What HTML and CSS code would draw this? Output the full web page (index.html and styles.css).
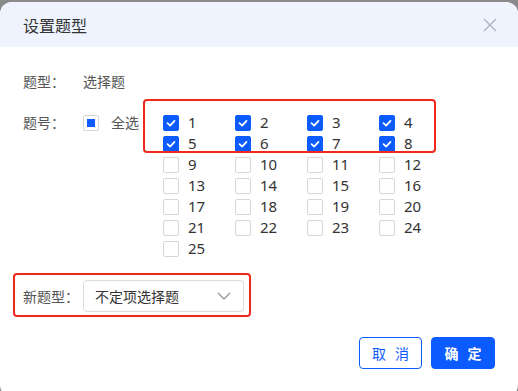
FILE: index.html
```html
<!DOCTYPE html>
<html>
<head>
    <link rel="stylesheet" href="styles.css">
</head>
<body>
    <div class="dialog">
        <div class="dialog-header">
            <span class="dialog-title">设置题型</span>
            <svg class="close" width="14" height="14" viewBox="0 0 14 14">
                <path d="M1 1 L13 13 M13 1 L1 13" stroke="#a9b1c2" stroke-width="1.3" fill="none"/>
            </svg>
        </div>
        <div class="dialog-body">
            <div class="form-row type-row">
                <span class="label">题型：</span>
                <span class="value">选择题</span>
            </div>
            <div class="form-row number-row">
                <span class="label">题号：</span>
                <label class="select-all">
                    <span class="box half"><span class="dot"></span></span>
                    <span>全选</span>
                </label>
                <div class="num-grid">
                    <div class="mark mark-grid"></div>
                    <label class="item"><span class="box on"><svg viewBox="0 0 16 16"><path d="M4 8.2 L7 11 L12 5.5"/></svg></span>1</label>
                    <label class="item"><span class="box on"><svg viewBox="0 0 16 16"><path d="M4 8.2 L7 11 L12 5.5"/></svg></span>2</label>
                    <label class="item"><span class="box on"><svg viewBox="0 0 16 16"><path d="M4 8.2 L7 11 L12 5.5"/></svg></span>3</label>
                    <label class="item"><span class="box on"><svg viewBox="0 0 16 16"><path d="M4 8.2 L7 11 L12 5.5"/></svg></span>4</label>
                    <label class="item"><span class="box on"><svg viewBox="0 0 16 16"><path d="M4 8.2 L7 11 L12 5.5"/></svg></span>5</label>
                    <label class="item"><span class="box on"><svg viewBox="0 0 16 16"><path d="M4 8.2 L7 11 L12 5.5"/></svg></span>6</label>
                    <label class="item"><span class="box on"><svg viewBox="0 0 16 16"><path d="M4 8.2 L7 11 L12 5.5"/></svg></span>7</label>
                    <label class="item"><span class="box on"><svg viewBox="0 0 16 16"><path d="M4 8.2 L7 11 L12 5.5"/></svg></span>8</label>
                    <label class="item"><span class="box"></span>9</label>
                    <label class="item"><span class="box"></span>10</label>
                    <label class="item"><span class="box"></span>11</label>
                    <label class="item"><span class="box"></span>12</label>
                    <label class="item"><span class="box"></span>13</label>
                    <label class="item"><span class="box"></span>14</label>
                    <label class="item"><span class="box"></span>15</label>
                    <label class="item"><span class="box"></span>16</label>
                    <label class="item"><span class="box"></span>17</label>
                    <label class="item"><span class="box"></span>18</label>
                    <label class="item"><span class="box"></span>19</label>
                    <label class="item"><span class="box"></span>20</label>
                    <label class="item"><span class="box"></span>21</label>
                    <label class="item"><span class="box"></span>22</label>
                    <label class="item"><span class="box"></span>23</label>
                    <label class="item"><span class="box"></span>24</label>
                    <label class="item"><span class="box"></span>25</label>
                </div>
            </div>
            <div class="form-row new-row">
                <div class="mark mark-new"></div>
                <span class="label">新题型：</span>
                <div class="select">
                    <span>不定项选择题</span>
                    <svg width="14" height="8" viewBox="0 0 14 8">
                        <path d="M1 1 L7 7 L13 1" stroke="#8a8f99" stroke-width="1.2" fill="none"/>
                    </svg>
                </div>
            </div>
        </div>
        <div class="dialog-footer">
            <button class="btn btn-cancel">取 消</button>
            <button class="btn btn-ok">确 定</button>
        </div>
    </div>
</body>
</html>
```
FILE: styles.css
```css
:root {
    --blue: #0b5bff;
    --red: #f2281f;
    --label: #555;
    --text: #333;
}

body {
    margin: 0;
    background: #8a8a8a;
    font-family: "Noto Sans", "Noto Sans CJK SC", sans-serif;
    font-size: 14px;
    color: var(--text);
}

.dialog {
    margin-top: 2px;
    height: 395px;
    background: #fff;
    border-radius: 12px;
    overflow: hidden;
}

.dialog-header {
    height: 45px;
    background: #eef3fe;
    display: flex;
    align-items: center;
    justify-content: space-between;
    padding: 0 21px 0 23px;
}

.dialog-title {
    font-family: "Noto Sans CJK SC", sans-serif;
    font-size: 16px;
    color: #333;
}

.dialog-body {
    padding: 24px 23px 0;
}

.form-row {
    display: flex;
    align-items: flex-start;
    line-height: 20px;
}

.label {
    width: 60px;
    color: var(--label);
    font-family: "Noto Sans CJK SC", sans-serif;
    flex-shrink: 0;
}

.value {
    color: var(--label);
    font-family: "Noto Sans CJK SC", sans-serif;
}

.number-row {
    margin-top: 21px;
    line-height: 21px;
}

.number-row .label {
    line-height: 21px;
}

.select-all {
    display: flex;
    align-items: center;
    gap: 12px;
    height: 21px;
    color: var(--label);
    font-family: "Noto Sans CJK SC", sans-serif;
}

.box {
    width: 14px;
    height: 14px;
    border: 1px solid #d6d6d6;
    border-radius: 2px;
    display: inline-flex;
    align-items: center;
    justify-content: center;
    flex-shrink: 0;
    background: #fff;
}

.box.on {
    background: var(--blue);
    border-color: var(--blue);
}

.box svg {
    width: 16px;
    height: 16px;
}

.box svg path {
    stroke: #fff;
    stroke-width: 2;
    fill: none;
    stroke-linecap: round;
    stroke-linejoin: round;
}

.dot {
    width: 8px;
    height: 8px;
    background: var(--blue);
}

.num-grid {
    position: relative;
    margin-left: 24px;
    display: grid;
    grid-template-columns: repeat(4, 72px);
    grid-auto-rows: 21px;
}

.item {
    display: flex;
    align-items: center;
    gap: 9px;
    color: var(--text);
    font-size: 15px;
}

.mark {
    position: absolute;
    border: 2px solid var(--red);
    border-radius: 4px;
}

.mark-grid {
    left: -20px;
    top: -13px;
    width: 289px;
    height: 50px;
}

.new-row {
    position: relative;
    margin-top: 21px;
    align-items: center;
}

.mark-new {
    left: -10px;
    top: -7px;
    width: 234px;
    height: 40px;
}

.select {
    height: 30px;
    border: 1px solid #dcdcdc;
    border-radius: 4px;
    display: flex;
    align-items: center;
    justify-content: space-between;
    padding: 0 12px 0 11px;
    box-sizing: content-box;
    width: 136px;
    font-family: "Noto Sans CJK SC", sans-serif;
    color: var(--text);
}

.dialog-footer {
    display: flex;
    justify-content: flex-end;
    gap: 9px;
    padding: 25px 23px 0;
}

.btn {
    height: 32px;
    border-radius: 4px;
    font-family: "Noto Sans CJK SC", sans-serif;
    font-size: 14px;
    padding: 0;
    letter-spacing: 3px;
    text-indent: 3px;
}

.btn-cancel {
    width: 63px;
    border: 1px solid var(--blue);
    background: #fff;
    color: var(--blue);
}

.btn-ok {
    width: 64px;
    border: 1px solid var(--blue);
    background: var(--blue);
    color: #fff;
    font-weight: bold;
}
```
